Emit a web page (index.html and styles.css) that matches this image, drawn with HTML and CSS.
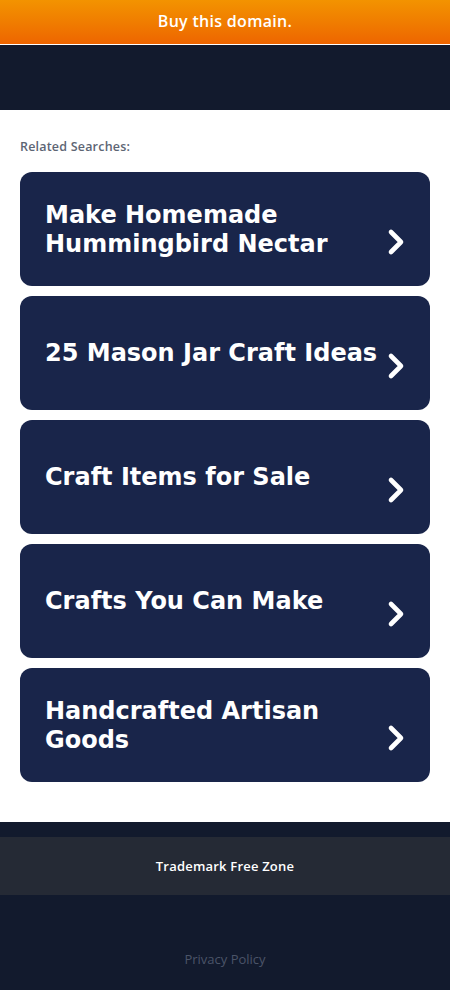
FILE: index.html
```html
<!DOCTYPE html>
<html lang="en">
<head>
<meta charset="utf-8">
<title>Buy this domain</title>
<link rel="stylesheet" href="styles.css">
</head>
<body>
<header class="banner"><a class="banner-link" href="#">Buy this domain.</a></header>
<div class="topbar"></div>
<main class="content">
  <p class="related-label">Related Searches:</p>
  <ul class="cards">
    <li class="card"><a href="#" class="card-link"><span class="card-text">Make Homemade Hummingbird Nectar</span><svg class="chev" viewBox="0 0 18 28" width="18" height="28"><path d="M4 4 L14 14 L4 24" fill="none" stroke="#fff" stroke-width="4.6" stroke-linecap="round" stroke-linejoin="round"/></svg></a></li>
    <li class="card"><a href="#" class="card-link"><span class="card-text">25 Mason Jar Craft Ideas</span><svg class="chev" viewBox="0 0 18 28" width="18" height="28"><path d="M4 4 L14 14 L4 24" fill="none" stroke="#fff" stroke-width="4.6" stroke-linecap="round" stroke-linejoin="round"/></svg></a></li>
    <li class="card"><a href="#" class="card-link"><span class="card-text">Craft Items for Sale</span><svg class="chev" viewBox="0 0 18 28" width="18" height="28"><path d="M4 4 L14 14 L4 24" fill="none" stroke="#fff" stroke-width="4.6" stroke-linecap="round" stroke-linejoin="round"/></svg></a></li>
    <li class="card"><a href="#" class="card-link"><span class="card-text">Crafts You Can Make</span><svg class="chev" viewBox="0 0 18 28" width="18" height="28"><path d="M4 4 L14 14 L4 24" fill="none" stroke="#fff" stroke-width="4.6" stroke-linecap="round" stroke-linejoin="round"/></svg></a></li>
    <li class="card"><a href="#" class="card-link"><span class="card-text">Handcrafted Artisan Goods</span><svg class="chev" viewBox="0 0 18 28" width="18" height="28"><path d="M4 4 L14 14 L4 24" fill="none" stroke="#fff" stroke-width="4.6" stroke-linecap="round" stroke-linejoin="round"/></svg></a></li>
  </ul>
</main>
<footer class="footer">
  <div class="footer-gap"></div>
  <div class="trademark">Trademark Free Zone</div>
  <div class="footer-bottom"><a class="privacy" href="#">Privacy Policy</a></div>
</footer>
</body>
</html>
```
FILE: styles.css
```css
* { box-sizing: border-box; }
html, body { margin: 0; padding: 0; }
body { background: #fff; font-family: "Open Sans", "DejaVu Sans", sans-serif; }
a { text-decoration: none; }

.banner {
  height: 45px;
  background: linear-gradient(to bottom, #f39300 0%, #f07d00 50%, #ee6500 100%);
  border-bottom: 1px solid #fff;
  display: flex;
  align-items: center;
  justify-content: center;
}
.banner-link {
  color: #fff;
  font-family: "Open Sans", sans-serif;
  font-size: 16px;
  font-weight: 600;
  letter-spacing: 0.3px;
  margin-top: -3px;
}
.topbar { height: 65px; background: #121a2d; }

.content { padding: 30px 20px 40px; }
.related-label {
  margin: 0 0 18px;
  font-family: "Open Sans", sans-serif;
  font-size: 12.5px;
  line-height: 14px;
  font-weight: 600;
  letter-spacing: 0.2px;
  color: #5d6574;
}
.cards { list-style: none; margin: 0; padding: 0; display: flex; flex-direction: column; gap: 10px; }
.card { background: #19254a; border-radius: 12px; height: 114px; }
.card-link {
  height: 100%;
  display: flex;
  align-items: center;
  padding: 0 25px 0 25px;
  color: #fff;
}
.card-text {
  flex: 1;
  font-family: "DejaVu Sans", sans-serif;
  font-weight: bold;
  font-size: 24px;
  line-height: 29px;
  padding-top: 1px;
  padding-right: 3px;
}
.chev { flex: none; margin-top: 26px; }

.footer { background: #121a2d; }
.footer-gap { height: 15px; }
.trademark {
  height: 58px;
  background: #252a35;
  color: #fff;
  display: flex;
  align-items: center;
  justify-content: center;
  font-family: "Open Sans", sans-serif;
  font-weight: 600;
  font-size: 13px;
  letter-spacing: 0.2px;
}
.footer-bottom {
  height: 95px;
  display: flex;
  justify-content: center;
  padding-top: 55px;
}
.privacy {
  color: #4b5468;
  font-family: "Open Sans", sans-serif;
  font-size: 13px;
  line-height: 18px;
}
```
